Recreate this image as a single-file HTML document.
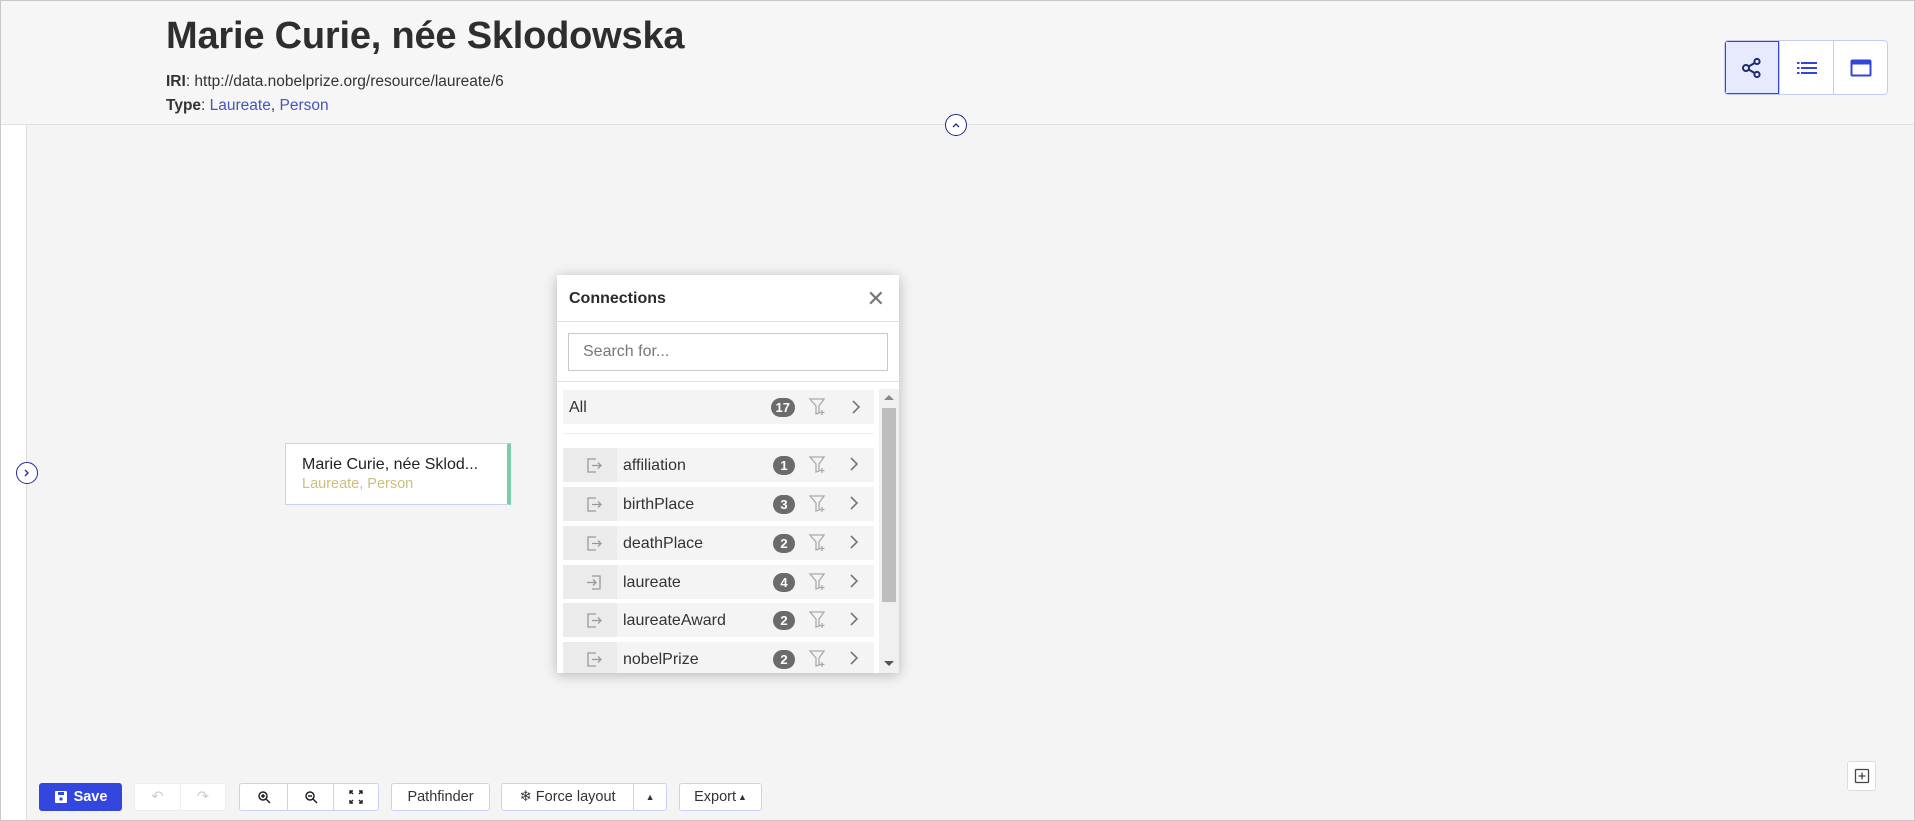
<!DOCTYPE html>
<html><head><meta charset="utf-8"><style>
*{box-sizing:border-box;margin:0;padding:0}
body{width:1915px;height:821px;overflow:hidden;background:#f4f4f4;font-family:"Liberation Sans",sans-serif;color:#333;position:relative}
.frame{position:absolute;inset:0;border:1px solid #c8c8c8;pointer-events:none;z-index:50}
.header{position:absolute;left:0;top:0;width:1915px;height:125px;background:#f6f6f6;border-bottom:1px solid #e2e2e2}
h1{position:absolute;left:166px;top:15px;font-size:38px;font-weight:bold;color:#2e2e2e;letter-spacing:-0.2px}
.meta{position:absolute;left:166px;font-size:15.5px;color:#333}
.meta a{color:#4a52b8;text-decoration:none}
.side{position:absolute;left:0;top:125px;width:27px;height:696px;background:#fff;border-right:1px solid #ddd}
.circ{position:absolute;width:22px;height:22px;border:1.5px solid #1f2a8c;border-radius:50%;background:#fff;display:flex;align-items:center;justify-content:center}
.vbtns{position:absolute;left:1724px;top:40px;height:55px;display:flex;border:1px solid #c4ccf5;border-radius:4px;background:#fff;overflow:hidden}
.vbtns div{width:54px;height:53px;display:flex;align-items:center;justify-content:center;border-left:1px solid #c4ccf5}
.vbtns div:first-child{border-left:none;background:#e6eafc;outline:1px solid #3345d8;outline-offset:-1px}
.node{position:absolute;left:285px;top:443px;width:226px;height:62px;background:#fff;border:1px solid #c9d1f5;border-right:4px solid #7acdab}
.node .t{position:absolute;left:16px;top:12px;font-size:16px;color:#222}
.node .s{position:absolute;left:16px;top:32px;font-size:14.5px;color:#cbbf7a}
.panel{position:absolute;left:557px;top:275px;width:342px;height:398px;background:#fff;box-shadow:0 2px 12px rgba(0,0,0,.25);overflow:hidden}
.ph{height:47px;border-bottom:1px solid #e0e0e0;position:relative}
.ph b{position:absolute;left:12px;top:15px;font-size:16px;color:#2a2a2a}
.ph .x{position:absolute;right:14px;top:11px;font-size:22px;color:#777}
.search{position:absolute;left:11px;top:58px;width:320px;height:38px;border:1px solid #c8c8c8;font-size:16px;color:#777;padding:9px 14px}
.div{position:absolute;left:0;top:106px;width:342px;border-top:1px solid #e0e0e0}
.row{position:absolute;left:6px;width:311px;height:34px;background:#f4f4f4;font-size:16px;color:#333}
.row .ic{position:absolute;left:0;top:0;width:54px;height:34px;background:#ebebeb}
.row .lb{position:absolute;top:9px}
.badge{position:absolute;right:79px;top:8px;height:19px;min-width:22px;padding:0 5px;border-radius:10px;background:#6b6b6b;color:#fff;font-size:13px;font-weight:bold;text-align:center;line-height:19px}
.row svg.f{position:absolute;right:46px;top:7px}
.row svg.c{position:absolute;right:13px;top:10px}
.sb{position:absolute;left:322px;top:114px;width:20px;height:284px;background:#f0f0f0}
.sb .th{position:absolute;left:3px;top:19px;width:14px;height:194px;background:#bdbdbd}
.tb{position:absolute;top:783px;height:28px;background:#fff;border:1px solid #c9d1f5;border-radius:3px;display:flex;align-items:center;font-size:14.5px;color:#333}
.tb .seg{height:100%;display:flex;align-items:center;justify-content:center;border-left:1px solid #c9d1f5}
.tb .seg:first-child{border-left:none}
</style></head><body>
<div class="header">
<h1>Marie Curie, née Sklodowska</h1>
<div class="meta" style="top:73px"><b>IRI</b>: http://data.nobelprize.org/resource/laureate/6</div>
<div class="meta" style="top:97px"><b>Type</b>: <a>Laureate</a>, <a>Person</a></div>
<div class="vbtns">
<div><svg width="22" height="22" viewBox="0 0 22 22" fill="none" stroke="#1f2a6c" stroke-width="2"><circle cx="5" cy="11" r="3"/><circle cx="16" cy="4.5" r="2.6"/><circle cx="16" cy="17.5" r="2.6"/><path d="M7.6 9.5l6-3.5M7.6 12.5l6 3.5"/></svg></div>
<div><svg width="22" height="14" viewBox="0 0 22 14" fill="#3345d8"><rect x="1" y="1" width="2.5" height="2"/><rect x="5" y="1" width="16" height="2"/><rect x="1" y="6" width="2.5" height="2"/><rect x="5" y="6" width="16" height="2"/><rect x="1" y="11" width="2.5" height="2"/><rect x="5" y="11" width="16" height="2"/></svg></div>
<div><svg width="22" height="18" viewBox="0 0 22 18" fill="none" stroke="#3345d8" stroke-width="2"><rect x="1.5" y="1.5" width="19" height="15" rx="1"/><path d="M1.5 4h19" stroke-width="3"/></svg></div>
</div>
</div>
<div class="side"></div>
<div class="circ" style="left:945px;top:114px"><svg width="10" height="8" viewBox="0 0 10 8"><path d="M2 6l3-3 3 3" fill="none" stroke="#1f2a8c" stroke-width="1.3"/></svg></div>
<div class="circ" style="left:16px;top:462px"><svg width="8" height="10" viewBox="0 0 8 10"><path d="M2 2l3 3-3 3" fill="none" stroke="#1f2a8c" stroke-width="1.3"/></svg></div>

<div class="node"><div class="t">Marie Curie, née Sklod...</div><div class="s">Laureate, Person</div></div>

<div class="panel">
<div class="ph"><b>Connections</b><span class="x">✕</span></div>
<div class="search">Search for...</div>
<div class="div"></div>
<div class="row" style="top:115px"><span class="lb" style="left:6px">All</span><span class="badge">17</span>
<svg class="f" width="20" height="20" viewBox="0 0 20 20" fill="none" stroke="#aaa" stroke-width="1.3"><path d="M2 2h14l-5 7v7l-3 1V9z"/><path d="M14 13v5M11.5 15.5h5"/></svg>
<svg class="c" width="10" height="14" viewBox="0 0 10 14"><path d="M2 1l6 6-6 6" fill="none" stroke="#777" stroke-width="1.6"/></svg></div>
<div style="position:absolute;left:6px;top:158px;width:311px;border-top:1px solid #eee"></div>
<div class="row" style="top:173px"><div class="ic"></div><span class="lb" style="left:60px">affiliation</span><span class="badge">1</span></div>
<div class="row" style="top:212px"><div class="ic"></div><span class="lb" style="left:60px">birthPlace</span><span class="badge">3</span></div>
<div class="row" style="top:251px"><div class="ic"></div><span class="lb" style="left:60px">deathPlace</span><span class="badge">2</span></div>
<div class="row" style="top:290px"><div class="ic"></div><span class="lb" style="left:60px">laureate</span><span class="badge">4</span></div>
<div class="row" style="top:328px"><div class="ic"></div><span class="lb" style="left:60px">laureateAward</span><span class="badge">2</span></div>
<div class="row" style="top:367px"><div class="ic"></div><span class="lb" style="left:60px">nobelPrize</span><span class="badge">2</span></div>
<div class="sb"><div class="th"></div><svg style="position:absolute;left:5px;top:5px" width="10" height="6"><path d="M0 6l5-5 5 5z" fill="#888"/></svg><svg style="position:absolute;left:5px;top:272px" width="10" height="6"><path d="M0 0l5 5 5-5z" fill="#555"/></svg></div>
</div>

<svg style="position:absolute;left:0;top:0" width="1915" height="821">
<g fill="none" stroke="#999" stroke-width="1.3">
<g transform="translate(586,457)"><path d="M10 2H2v13h8M6 8.5h9M12 5.5l3 3-3 3"/></g>
<g transform="translate(586,496)"><path d="M10 2H2v13h8M6 8.5h9M12 5.5l3 3-3 3"/></g>
<g transform="translate(586,535)"><path d="M10 2H2v13h8M6 8.5h9M12 5.5l3 3-3 3"/></g>
<g transform="translate(586,574)"><path d="M6 2h8v13H6M1 8.5h9M7 5.5l3 3-3 3"/></g>
<g transform="translate(586,612)"><path d="M10 2H2v13h8M6 8.5h9M12 5.5l3 3-3 3"/></g>
<g transform="translate(586,651)"><path d="M10 2H2v13h8M6 8.5h9M12 5.5l3 3-3 3"/></g>
</g>
<g fill="none" stroke="#aaa" stroke-width="1.3">
<g transform="translate(808,455)"><path d="M2 2h14l-5 7v7l-3 1V9z"/><path d="M14 13v5M11.5 15.5h5"/></g>
<g transform="translate(808,494)"><path d="M2 2h14l-5 7v7l-3 1V9z"/><path d="M14 13v5M11.5 15.5h5"/></g>
<g transform="translate(808,533)"><path d="M2 2h14l-5 7v7l-3 1V9z"/><path d="M14 13v5M11.5 15.5h5"/></g>
<g transform="translate(808,572)"><path d="M2 2h14l-5 7v7l-3 1V9z"/><path d="M14 13v5M11.5 15.5h5"/></g>
<g transform="translate(808,610)"><path d="M2 2h14l-5 7v7l-3 1V9z"/><path d="M14 13v5M11.5 15.5h5"/></g>
<g transform="translate(808,649)"><path d="M2 2h14l-5 7v7l-3 1V9z"/><path d="M14 13v5M11.5 15.5h5"/></g>
</g>
<g fill="none" stroke="#777" stroke-width="1.6">
<path d="M851 458l6 6-6 6"/><path d="M851 497l6 6-6 6"/><path d="M851 536l6 6-6 6"/><path d="M851 575l6 6-6 6"/><path d="M851 613l6 6-6 6"/><path d="M851 652l6 6-6 6"/>
</g>
</svg>

<div class="tb" style="left:39px;width:83px;background:#3346e0;border-color:#3346e0;color:#fff;font-weight:bold;justify-content:center"><svg width="14" height="14" viewBox="0 0 14 14" style="margin-right:6px"><rect x="1" y="1" width="12" height="12" rx="1" fill="#fff"/><rect x="4" y="2" width="6" height="3" fill="#3346e0"/><circle cx="7" cy="9" r="1.6" fill="#3346e0"/></svg>Save</div>
<div class="tb" style="left:134px;width:92px;border-color:#eee"><div class="seg" style="width:46px;border-color:#eee;color:#ccc">↶</div><div class="seg" style="width:46px;border-color:#eee;color:#ccc">↷</div></div>
<div class="tb" style="left:239px;width:140px"><div class="seg" style="width:47px"><svg width="14" height="14" viewBox="0 0 14 14" fill="none" stroke="#222" stroke-width="1.5"><circle cx="6" cy="6" r="4"/><path d="M9 9l4 4M4 6h4M6 4v4"/></svg></div><div class="seg" style="width:46px"><svg width="14" height="14" viewBox="0 0 14 14" fill="none" stroke="#222" stroke-width="1.5"><circle cx="6" cy="6" r="4"/><path d="M9 9l4 4M4 6h4"/></svg></div><div class="seg" style="width:45px"><svg width="14" height="14" viewBox="0 0 14 14" fill="none" stroke="#222" stroke-width="1.4"><path d="M1 4V1h3M13 4V1h-3M1 10v3h3M13 10v3h-3M1 1l3 3M13 1l-3 3M1 13l3-3M13 13l-3-3"/></svg></div></div>
<div class="tb" style="left:391px;width:99px;justify-content:center">Pathfinder</div>
<div class="tb" style="left:501px;width:166px"><div class="seg" style="width:132px">❄&nbsp;Force layout</div><div class="seg" style="width:33px;font-size:9px">▲</div></div>
<div class="tb" style="left:679px;width:83px;justify-content:center">Export<span style="font-size:9px;margin-left:2px">▲</span></div>
<div style="position:absolute;left:1847px;top:761px;width:29px;height:30px;background:#fff;border:1px solid #ddd;border-radius:3px;display:flex;align-items:center;justify-content:center"><svg width="16" height="16" viewBox="0 0 16 16" fill="none" stroke="#444" stroke-width="1.3"><rect x="1.5" y="1.5" width="13" height="13" rx="1"/><path d="M8 4.5v7M4.5 8h7"/></svg></div>
<div class="frame"></div>
</body></html>
